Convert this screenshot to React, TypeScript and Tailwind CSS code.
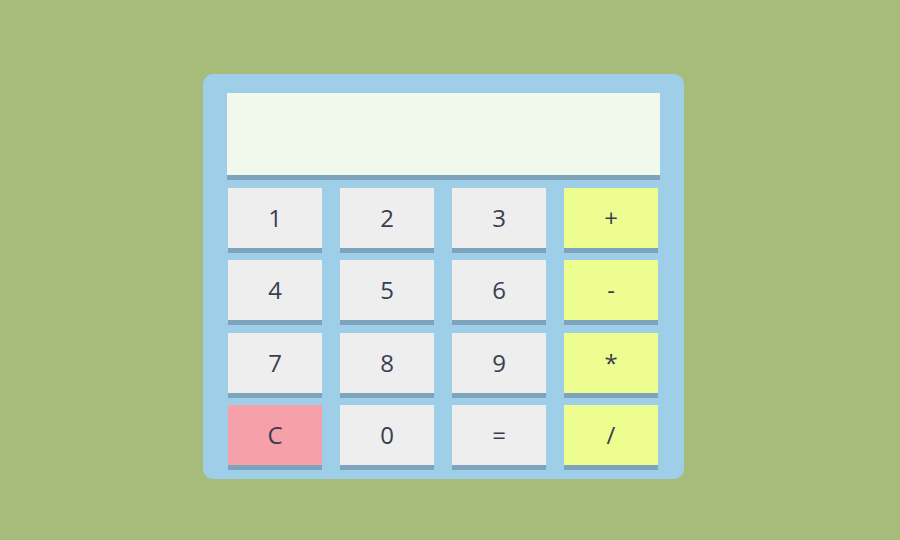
import React from "react";

const keys = [
  { label: "1" }, { label: "2" }, { label: "3" }, { label: "+", op: true },
  { label: "4" }, { label: "5" }, { label: "6" }, { label: "-", op: true },
  { label: "7" }, { label: "8" }, { label: "9" }, { label: "*", op: true },
  { label: "C", clear: true }, { label: "0" }, { label: "=" }, { label: "/", op: true },
];

function Key({ label, op, clear }: { label: string; op?: boolean; clear?: boolean }) {
  const bg = clear ? "bg-[#f6a0a9]" : op ? "bg-[#edfd8f]" : "bg-[#eeeeee]";
  return (
    <button
      type="button"
      className={`${bg} h-[60px] w-[94px] flex items-center justify-center text-[24px] font-normal text-[#3b3d4f] shadow-[0_5px_0_#7ea3bd]`}
    >
      {label}
    </button>
  );
}

export default function App() {
  return (
    <div
      className="w-[900px] h-[540px] bg-[#a7bc7b] pt-[74px] pl-[203px]"
      style={{ fontFamily: '"Open Sans", sans-serif' }}
    >
      <div className="w-[481px] h-[405px] rounded-[10px] bg-[#9fcfe8] pt-[19px] pl-[24px]">
        <div className="w-[433px] h-[82px] bg-[#f0f9ec] shadow-[0_5px_0_#7ea3bd]" />
        <div className="mt-[13px] ml-[1px] grid grid-cols-[repeat(4,94px)] gap-x-[18px] gap-y-[12.3px]">
          {keys.map((k) => (
            <Key key={k.label} {...k} />
          ))}
        </div>
      </div>
    </div>
  );
}
